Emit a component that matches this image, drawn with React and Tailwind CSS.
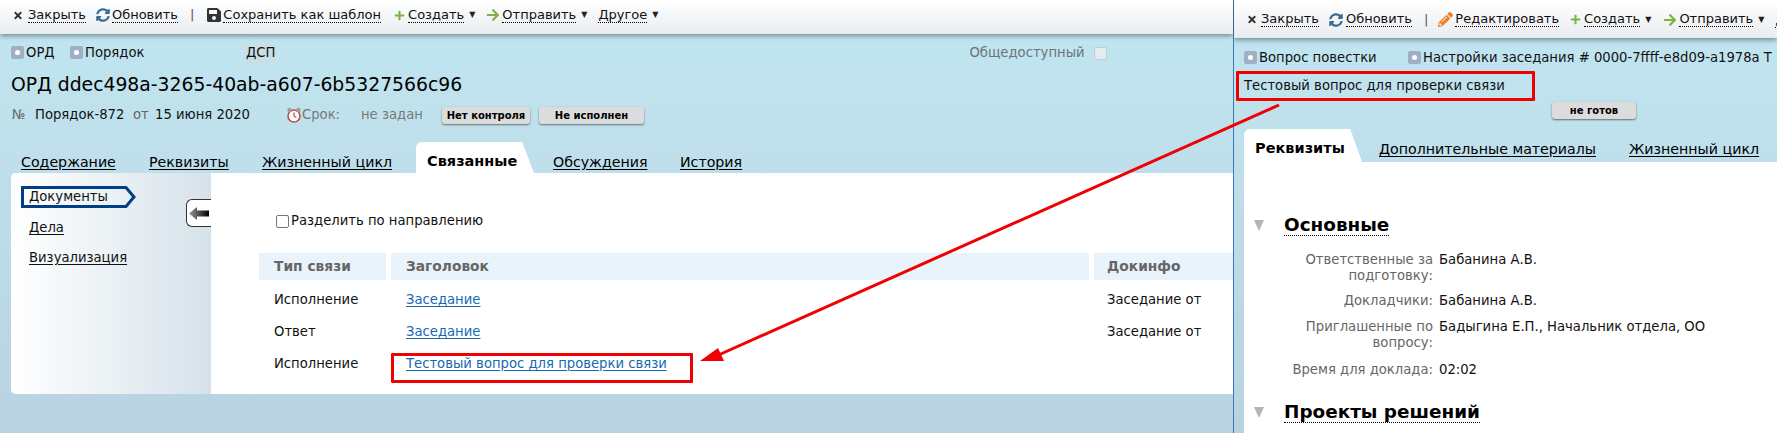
import React from 'react';
import { FaTimes, FaSyncAlt, FaSave, FaPlus, FaArrowRight, FaPencilAlt } from 'react-icons/fa';

const ToolLink = ({ children }) => (
  <span className="shrink-0 border-b border-dotted border-black leading-[14px]">{children}</span>
);

const Caret = () => <span className="shrink-0 ml-[5px] text-[8px] text-[#222]">▼</span>;

const TypeBadge = ({ label, className }) => (
  <span className={`flex items-center ${className || ''}`}>
    <span className="w-[13px] h-[13px] mr-[2px] rounded-[2px] bg-[#a1afc4] flex items-center justify-center">
      <span className="w-[5px] h-[5px] rounded-full bg-white"></span>
    </span>
    {label}
  </span>
);

const StatusButton = ({ children, className }) => (
  <span className={`flex items-center justify-center rounded-[3px] bg-[#dcdcdc] shadow-[0_1px_2px_rgba(0,0,0,0.5)] text-[10px] font-bold text-black ${className}`}>
    {children}
  </span>
);

const Toolbar = ({ className, children }) => (
  <div className={`${className} shrink-0 flex items-center text-[13px] text-[#111] whitespace-nowrap bg-gradient-to-b from-white to-[#e9ecef] shadow-[0_2px_5px_rgba(0,0,0,0.4)] relative`}>
    {children}
  </div>
);

const leftTabs = [
  { label: 'Содержание', width: 'w-[128px]' },
  { label: 'Реквизиты', width: 'w-[113px]' },
  { label: 'Жизненный цикл', width: 'w-[154px]' },
];

const rows = [
  { type: 'Исполнение', title: 'Заседание', info: 'Заседание от' },
  { type: 'Ответ', title: 'Заседание', info: 'Заседание от' },
  { type: 'Исполнение', title: 'Тестовый вопрос для проверки связи', info: '' },
];

const details = [
  { label: ['Ответственные за', 'подготовку:'], value: 'Бабанина А.В.', className: 'h-[41px]' },
  { label: ['Докладчики:'], value: 'Бабанина А.В.', className: 'h-[26px]' },
  { label: ['Приглашенные по', 'вопросу:'], value: 'Бадыгина Е.П., Начальник отдела, ОО', className: 'h-[43px]' },
  { label: ['Время для доклада:'], value: '02:02', className: 'h-[26px]' },
];

const SectionTitle = ({ children }) => (
  <div className="flex items-center">
    <span className="w-0 h-0 ml-[10px] mr-[20px] border-l-[5px] border-r-[5px] border-t-[11px] border-l-transparent border-r-transparent border-t-[#b5b5b5]"></span>
    <span className="text-[18.4px] font-bold leading-[20px] text-black border-b border-dotted border-black">{children}</span>
  </div>
);

const AlarmIcon = () => (
  <svg width="16" height="16" viewBox="0 0 16 16" className="shrink-0">
    <circle cx="8" cy="9" r="6" fill="#fff" stroke="#b5504a" strokeWidth="1.6" />
    <path d="M8 5.5V9l2.4 1.4" fill="none" stroke="#b5504a" strokeWidth="1.2" />
    <circle cx="3.5" cy="3" r="2.2" fill="#a89a94" />
    <circle cx="12.5" cy="3" r="2.2" fill="#a89a94" />
  </svg>
);

const BackArrow = () => (
  <svg width="20" height="13" viewBox="0 0 20 13">
    <defs>
      <linearGradient id="backArrowFill" x1="0" x2="1" y1="0" y2="0">
        <stop offset="0" stopColor="#9a9a9a" />
        <stop offset="1" stopColor="#000" />
      </linearGradient>
    </defs>
    <path d="M0 6.5L8 0V3.5H20V9.5H8V13Z" fill="url(#backArrowFill)" />
  </svg>
);

export default function App() {
  return (
    <div className="relative flex w-[1777px] h-[433px] overflow-hidden text-[13.2px] text-[#111] font-['DejaVu_Sans',sans-serif]">
      {/* left window */}
      <div className="w-[1233px] shrink-0 flex flex-col bg-gradient-to-b from-[#c1e7f1] to-[#b9d2e1]">
        <Toolbar className="h-[34px] pb-[4px] pl-[13px]">
          <FaTimes className="shrink-0 text-[11px] text-[#333] w-[10px] mr-[5px]" />
          <ToolLink>Закрыть</ToolLink>
          <FaSyncAlt className="shrink-0 ml-[10px] mr-[2px] text-[14px] text-[#3c6d96]" />
          <ToolLink>Обновить</ToolLink>
          <span className="ml-[12px] mr-[12px] text-[#555]">|</span>
          <FaSave className="shrink-0 mr-[1px] text-[16px] text-[#333]" />
          <ToolLink>Сохранить как шаблон</ToolLink>
          <FaPlus className="shrink-0 ml-[13px] mr-[3px] text-[11px] text-[#7cb342]" />
          <ToolLink>Создать</ToolLink>
          <Caret />
          <FaArrowRight className="shrink-0 ml-[11px] mr-[2px] text-[14px] text-[#7cb342]" />
          <ToolLink>Отправить</ToolLink>
          <Caret />
          <span className="ml-[11px]"><ToolLink>Другое</ToolLink></span>
          <Caret />
        </Toolbar>

        <div className="h-[36px] shrink-0 flex items-center pl-[11px] pt-[2px]">
          <TypeBadge label="ОРД" className="w-[59px]" />
          <TypeBadge label="Порядок" className="w-[175px]" />
          <span className="bg-[#c9dfe4] px-[1px]">ДСП</span>
          <span className="ml-[693px] text-[#6b7378]">Общедоступный</span>
          <span className="ml-[9px] w-[13px] h-[13px] rounded-[2px] border border-[#c2cdd2] bg-[#e3edf0]"></span>
        </div>

        <div className="h-[30px] shrink-0 flex items-center pl-[11px] text-[18.8px] text-black whitespace-nowrap">
          ОРД ddec498a-3265-40ab-a607-6b5327566c96
        </div>

        <div className="h-[26px] shrink-0 mt-[2px] flex items-center pl-[12px] text-[#111] whitespace-nowrap">
          <span className="w-[23px] text-[#666]">№</span>
          <span className="w-[98px]">Порядок-872</span>
          <span className="w-[22px] text-[#666]">от</span>
          <span className="w-[131px]">15 июня 2020</span>
          <span className="w-[16px]"><AlarmIcon /></span>
          <span className="w-[59px] text-[#777]">Срок:</span>
          <span className="w-[81px] text-[#777]">не задан</span>
          <StatusButton className="w-[88px] h-[17px]">Нет контроля</StatusButton>
          <StatusButton className="ml-[9px] w-[105px] h-[17px]">Не исполнен</StatusButton>
        </div>

        <div className="h-[31px] shrink-0 mt-[14px] flex items-end pl-[21px] text-[14.2px] text-black">
          {leftTabs.map((t) => (
            <span key={t.label} className={`${t.width} h-[27px] pt-[6px] flex items-center`}>
              <span className="underline underline-offset-2">{t.label}</span>
            </span>
          ))}
          <span className="w-[118px] h-[31px] pl-[11px] pt-[9px] bg-white rounded-tl-[6px] [clip-path:polygon(0_0,90%_0,100%_100%,0_100%)] font-bold text-[14.5px] flex items-center">Связанные</span>
          <span className="ml-[19px] w-[127px] h-[27px] pt-[6px] flex items-center"><span className="underline underline-offset-2">Обсуждения</span></span>
          <span className="h-[27px] pt-[6px] flex items-center"><span className="underline underline-offset-2">История</span></span>
        </div>

        <div className="ml-[11px] h-[221px] shrink-0 flex bg-white rounded-l-[5px] overflow-hidden">
          <div className="w-[200px] shrink-0 relative pt-[13px] pl-[10px] bg-gradient-to-r from-white to-[#d6e2ea]">
            <div className="relative w-[115px] h-[22px] flex items-center pl-[8px]">
              <svg width="115" height="22" viewBox="0 0 115 22" className="absolute left-0 top-0">
                <path d="M1.5 1.5H105L113 11L105 20.5H1.5Z" fill="none" stroke="#003f87" strokeWidth="3" />
              </svg>
              <span className="relative">Документы</span>
            </div>
            <div className="mt-[10px] pl-[8px] underline underline-offset-2">Дела</div>
            <div className="mt-[10px] pl-[8px] underline underline-offset-2">Визуализация</div>
            <div className="absolute right-0 top-[26px] w-[25px] h-[28px] flex items-center justify-center bg-white border border-r-0 border-[#333] rounded-l-[6px]">
              <BackArrow />
            </div>
          </div>

          <div className="flex-1 min-w-0 pl-[48px]">
            <div className="flex items-center h-[20px] mt-[38px] pl-[17px]">
              <span className="w-[13px] h-[13px] mr-[2px] rounded-[2px] border border-[#767676] bg-white"></span>
              Разделить по направлению
            </div>
            <div className="mt-[22px] grid grid-cols-[127px_698px_1fr] gap-x-[5px]">
              <div className="h-[27px] pl-[15px] flex items-center bg-[#e9f3fb] font-bold text-[13.8px] text-[#666]">Тип связи</div>
              <div className="h-[27px] pl-[15px] flex items-center bg-[#e9f3fb] font-bold text-[13.8px] text-[#666]">Заголовок</div>
              <div className="h-[27px] pl-[13px] flex items-center bg-[#e9f3fb] font-bold text-[13.8px] text-[#666]">Докинфо</div>
              {rows.map((r, i) => (
                <React.Fragment key={i}>
                  <div className="h-[32px] mt-[4px] -mb-[4px] pl-[15px] flex items-center">{r.type}</div>
                  <div className="h-[32px] mt-[4px] -mb-[4px] pl-[15px] flex items-center">
                    <a className="text-[#1669b0] underline underline-offset-2">{r.title}</a>
                  </div>
                  <div className="h-[32px] mt-[4px] -mb-[4px] pl-[13px] flex items-center whitespace-nowrap">{r.info}</div>
                </React.Fragment>
              ))}
            </div>
          </div>
        </div>
      </div>

      {/* right window */}
      <div className="flex-1 min-w-0 flex flex-col border-l border-[#3b78b8] bg-gradient-to-b from-[#c1e7f1] to-[#b9d2e1] overflow-hidden">
        <Toolbar className="h-[38px] pt-[1px] pl-[13px]">
          <FaTimes className="shrink-0 text-[11px] text-[#333] w-[10px] mr-[4px]" />
          <ToolLink>Закрыть</ToolLink>
          <FaSyncAlt className="shrink-0 ml-[10px] mr-[3px] text-[14px] text-[#3c6d96]" />
          <ToolLink>Обновить</ToolLink>
          <span className="ml-[12px] mr-[10px] text-[#555]">|</span>
          <FaPencilAlt className="shrink-0 mr-[2px] text-[15px] text-[#f08028]" />
          <ToolLink>Редактировать</ToolLink>
          <FaPlus className="shrink-0 ml-[11px] mr-[3px] text-[11px] text-[#7cb342]" />
          <ToolLink>Создать</ToolLink>
          <Caret />
          <FaArrowRight className="shrink-0 ml-[12px] mr-[2px] text-[14px] text-[#7cb342]" />
          <ToolLink>Отправить</ToolLink>
          <Caret />
          <span className="ml-[11px] shrink-0"><ToolLink>Другое</ToolLink></span>
        </Toolbar>

        <div className="h-[33px] shrink-0 flex items-center pl-[10px] pt-[7px] whitespace-nowrap">
          <TypeBadge label="Вопрос повестки" className="w-[164px]" />
          <TypeBadge label="Настройки заседания # 0000-7ffff-e8d09-a1978a Т" />
        </div>
        <div className="h-[29px] shrink-0 flex items-center pl-[10px]">Тестовый вопрос для проверки связи</div>
        <div className="h-[17px] shrink-0 mt-[2px] flex pl-[318px]">
          <StatusButton className="w-[84px] h-[17px]">не готов</StatusButton>
        </div>

        <div className="h-[33px] shrink-0 mt-[10px] ml-[10px] flex items-end text-[14.2px] text-black whitespace-nowrap">
          <span className="w-[118px] h-[33px] pl-[11px] pt-[7px] bg-white rounded-tl-[6px] [clip-path:polygon(0_0,90%_0,100%_100%,0_100%)] font-bold text-[14.5px] flex items-center">Реквизиты</span>
          <span className="ml-[17px] w-[250px] h-[27px] pt-[3px] flex items-center"><span className="underline underline-offset-2">Дополнительные материалы</span></span>
          <span className="h-[27px] pt-[3px] flex items-center"><span className="underline underline-offset-2">Жизненный цикл</span></span>
        </div>

        <div className="flex-1 ml-[10px] bg-white pt-[53px]">
          <SectionTitle>Основные</SectionTitle>
          <div className="mt-[16px]">
            {details.map((d) => (
              <div key={d.value} className={`flex ${d.className}`}>
                <div className="w-[189px] text-right text-[#666] leading-[16px]">
                  {d.label.map((l) => <div key={l}>{l}</div>)}
                </div>
                <div className="ml-[6px] leading-[16px]">{d.value}</div>
              </div>
            ))}
          </div>
          <div className="mt-[14px]"><SectionTitle>Проекты решений</SectionTitle></div>
        </div>
      </div>

      {/* red annotations over the screenshot */}
      <div className="absolute left-[391px] top-[353px] w-[302px] h-[30px] border-[3px] border-[#f00000] rounded-[1px]"></div>
      <div className="absolute left-[1236px] top-[71px] w-[299px] h-[30px] border-[3px] border-[#f00000] rounded-[1px]"></div>
      <svg className="absolute left-0 top-0 pointer-events-none" width="1777" height="433">
        <path d="M1279 105L714 357" stroke="#f00000" strokeWidth="3" fill="none" />
        <path d="M700 361L718 348L724 361Z" fill="#f00000" />
      </svg>
    </div>
  );
}
